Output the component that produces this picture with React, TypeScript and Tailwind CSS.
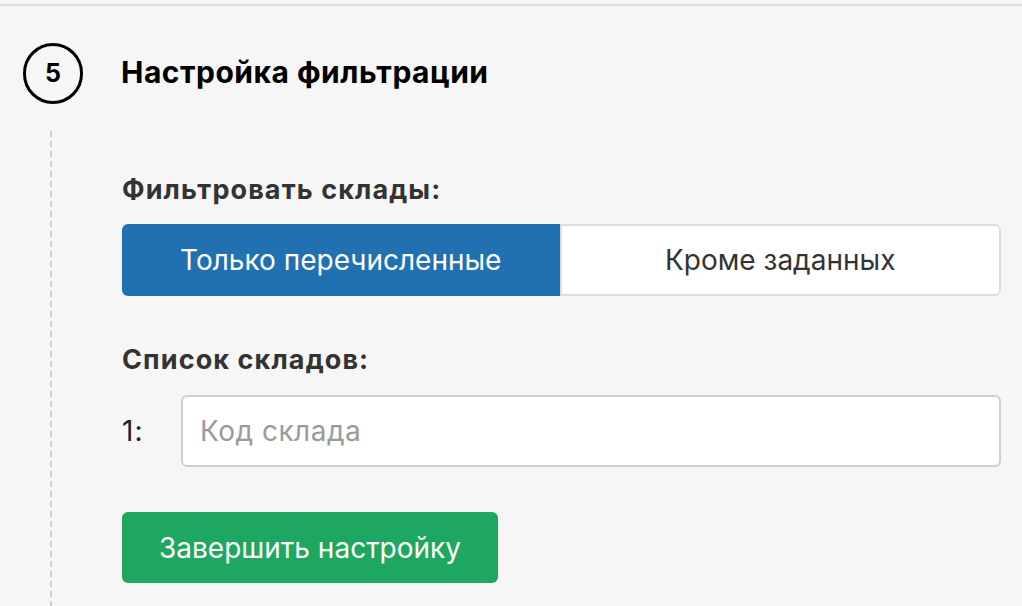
import { useState } from 'react'

const font = { fontFamily: 'Inter, "Noto Sans", sans-serif' }

export default function App() {
    const [mode, setMode] = useState<'only' | 'except'>('only')
    const [code, setCode] = useState('')

    return (
        <div className="min-h-[606px] bg-[#f6f6f6] pt-1" style={font}>
            <div className="border-t-2 border-[#dedede]">
                {/* step header */}
                <div className="mt-[37px] flex items-center pl-[23px]">
                    <div className="flex h-[61px] w-[60px] items-center justify-center rounded-full border-[3px] border-black text-[25px] font-bold text-black">
                        5
                    </div>
                    <h2 className="ml-[38px] -mt-[2px] text-[30px] font-bold tracking-[0.5px] text-black">
                        Настройка фильтрации
                    </h2>
                </div>

                <div className="mt-[27px] flex">
                    <div className="ml-[50px] w-[2px] bg-[linear-gradient(to_bottom,#cfcfcf_60%,transparent_60%)] bg-[length:2px_10px]" />

                    <div className="ml-[70px] mr-[21px] flex-1 pt-[45px] pb-[24px]">
                        <div className="text-[27px] font-bold leading-none tracking-[1.1px] text-[#333]">Фильтровать склады:</div>

                        <div className="mt-[21px] flex h-[72px] text-[28px]">
                            <button
                                onClick={() => setMode('only')}
                                className={
                                    mode === 'only'
                                        ? 'flex-1 rounded-l-[6px] bg-[#2070b2] text-white'
                                        : 'flex-1 rounded-l-[6px] border-2 border-[#dddddd] bg-white text-[#333]'
                                }
                            >
                                Только перечисленные
                            </button>
                            <button
                                onClick={() => setMode('except')}
                                className={
                                    mode === 'except'
                                        ? 'flex-1 rounded-r-[6px] bg-[#2070b2] text-white'
                                        : 'flex-1 rounded-r-[6px] border-2 border-[#dddddd] bg-white text-[#333]'
                                }
                            >
                                Кроме заданных
                            </button>
                        </div>

                        <div className="mt-[50px] text-[27px] font-bold leading-none tracking-[1.1px] text-[#333]">Список складов:</div>

                        <div className="mt-[22px] flex items-center">
                            <span className="w-[59px] text-[28px] tracking-[1px] text-[#222]">1:</span>
                            <input
                                value={code}
                                onChange={(e) => setCode(e.target.value)}
                                placeholder="Код склада"
                                className="h-[72px] flex-1 rounded-[6px] border-2 border-[#d0d0d0] bg-white px-[17px] text-[28px] tracking-[0.5px] text-[#333] outline-none placeholder:text-[#9a9a9a]"
                            />
                        </div>

                        <button className="mt-[45px] h-[71px] w-[376px] rounded-[6px] bg-[#1da760] text-[28px] text-white">
                            Завершить настройку
                        </button>
                    </div>
                </div>
            </div>
        </div>
    )
}
